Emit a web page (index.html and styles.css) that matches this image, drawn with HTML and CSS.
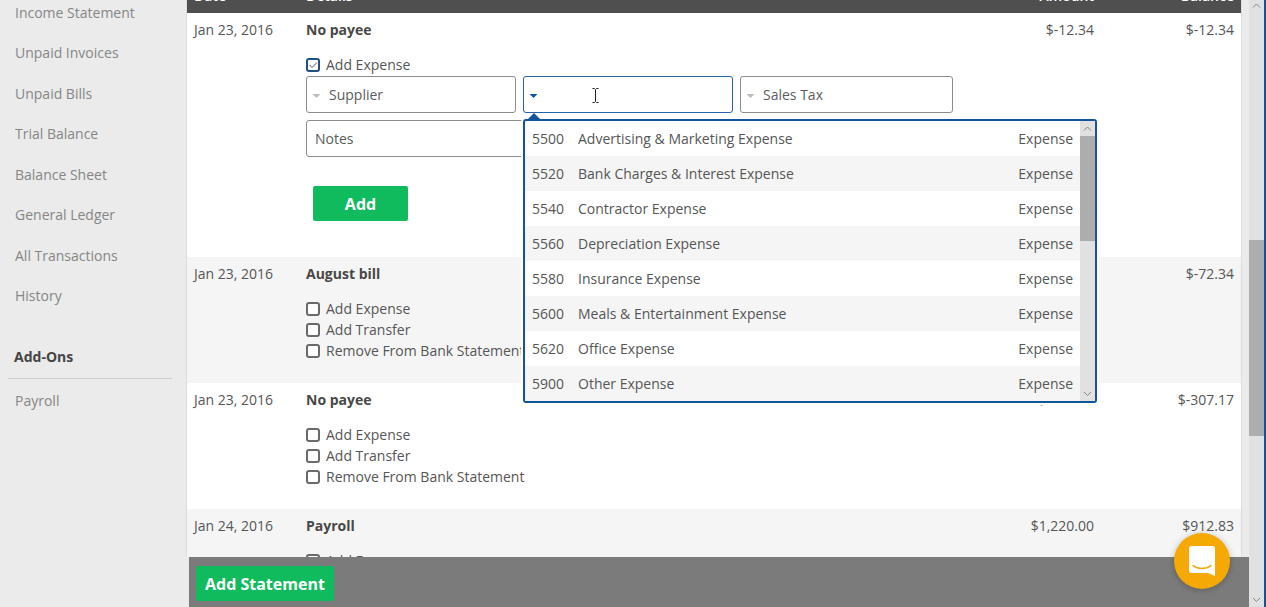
FILE: index.html
```html
<!DOCTYPE html>
<html lang="en">
<head>
<meta charset="utf-8">
<title>Bank Statement</title>
<link rel="stylesheet" href="styles.css">
</head>
<body>
<div class="app">
  <nav class="sidebar">
    <ul class="nav-list">
      <li><a href="#">Income Statement</a></li>
      <li><a href="#">Unpaid Invoices</a></li>
      <li><a href="#">Unpaid Bills</a></li>
      <li><a href="#">Trial Balance</a></li>
      <li><a href="#">Balance Sheet</a></li>
      <li><a href="#">General Ledger</a></li>
      <li><a href="#">All Transactions</a></li>
      <li><a href="#">History</a></li>
    </ul>
    <h2 class="nav-title">Add-Ons</h2>
    <ul class="nav-addons">
      <li><a href="#">Payroll</a></li>
    </ul>
  </nav>

  <main class="main">
    <div class="content">
      <table class="statement">
        <thead>
          <tr><th class="date">Date</th><th>Details</th><th class="money">Amount</th><th class="money">Balance</th></tr>
        </thead>
        <tbody>
          <tr>
            <td>Jan 23, 2016</td>
            <td>
              <strong class="payee">No payee</strong>
              <label class="check"><input type="checkbox" checked>Add Expense</label>
              <form class="expense">
                <div class="fields">
                  <div class="field">
                    <svg class="caret" viewBox="0 0 8 4"><path d="M0 0h8L4 4z"/></svg>
                    <input class="box combo" type="text" placeholder="Supplier" aria-label="Supplier">
                  </div>
                  <div class="field active">
                    <svg class="caret" viewBox="0 0 8 4"><path d="M0 0h8L4 4z"/></svg>
                    <input class="box combo" type="text" aria-label="Account">
                    <svg class="pointer" viewBox="0 0 7 15"><path d="M.5.5h2l1 1 1-1h2M3.5 1.500v12M.5 14.500h2l1-1 1 1h2"/></svg>
                    <div class="dropdown">
                      <ul class="options" role="listbox" aria-label="Accounts">
                        <li role="option"><span>5500</span><span>Advertising &amp; Marketing Expense</span><span>Expense</span></li>
                        <li role="option"><span>5520</span><span>Bank Charges &amp; Interest Expense</span><span>Expense</span></li>
                        <li role="option"><span>5540</span><span>Contractor Expense</span><span>Expense</span></li>
                        <li role="option"><span>5560</span><span>Depreciation Expense</span><span>Expense</span></li>
                        <li role="option"><span>5580</span><span>Insurance Expense</span><span>Expense</span></li>
                        <li role="option"><span>5600</span><span>Meals &amp; Entertainment Expense</span><span>Expense</span></li>
                        <li role="option"><span>5620</span><span>Office Expense</span><span>Expense</span></li>
                        <li role="option"><span>5900</span><span>Other Expense</span><span>Expense</span></li>
                      </ul>
                      <div class="scrollbar">
                        <svg class="arrow" viewBox="0 0 15 15"><path d="M4 9.500 7.500 6 11 9.500"/></svg>
                        <div class="track"><div class="thumb list-thumb"></div></div>
                        <svg class="arrow" viewBox="0 0 15 15"><path d="M4 6 7.500 9.500 11 6"/></svg>
                      </div>
                    </div>
                  </div>
                  <div class="field tax">
                    <svg class="caret" viewBox="0 0 8 4"><path d="M0 0h8L4 4z"/></svg>
                    <input class="box combo" type="text" placeholder="Sales Tax" aria-label="Sales Tax">
                  </div>
                </div>
                <input class="box notes" type="text" placeholder="Notes" aria-label="Notes">
                <button class="btn add" type="button">Add</button>
              </form>
            </td>
            <td class="money">$-12.34</td>
            <td class="money">$-12.34</td>
          </tr>
          <tr>
            <td>Jan 23, 2016</td>
            <td>
              <strong class="payee">August bill</strong>
              <label class="check"><input type="checkbox">Add Expense</label>
              <label class="check"><input type="checkbox">Add Transfer</label>
              <label class="check"><input type="checkbox">Remove From Bank Statement</label>
            </td>
            <td class="money"></td>
            <td class="money">$-72.34</td>
          </tr>
          <tr>
            <td>Jan 23, 2016</td>
            <td>
              <strong class="payee">No payee</strong>
              <label class="check"><input type="checkbox">Add Expense</label>
              <label class="check"><input type="checkbox">Add Transfer</label>
              <label class="check"><input type="checkbox">Remove From Bank Statement</label>
            </td>
            <td class="money">$-234.83</td>
            <td class="money">$-307.17</td>
          </tr>
          <tr>
            <td>Jan 24, 2016</td>
            <td>
              <strong class="payee">Payroll</strong>
              <label class="check"><input type="checkbox">Add Expense</label>
            </td>
            <td class="money">$1,220.00</td>
            <td class="money">$912.83</td>
          </tr>
        </tbody>
      </table>
    </div>
    <footer class="actions">
      <button class="btn" type="button">Add Statement</button>
    </footer>
  </main>

  <div class="scrollbar page-scroll">
    <svg class="arrow" viewBox="0 0 15 15"><path d="M4 7.500 7.500 4 11 7.500"/></svg>
    <div class="track"><div class="thumb page-thumb"></div></div>
    <svg class="arrow" viewBox="0 0 15 15"><path d="M4 6 7.500 9.500 11 6"/></svg>
  </div>

  <button class="chat" type="button" aria-label="Open chat">
    <svg viewBox="0 0 28 32"><path class="bubble" d="M4 1h20a3 3 0 0 1 3 3v27l-7-3H4a3 3 0 0 1-3-3V4a3 3 0 0 1 3-3z"/><path class="smile" d="M5 20.500c5 4 13 4 18 0"/></svg>
  </button>
</div>
</body>
</html>
```
FILE: styles.css
```css
* { box-sizing: border-box; }

body {
  margin: 0;
  font: 14px/20px "Open Sans", "Noto Sans", sans-serif;
  color: #565656;
  background: #ebebeb;
}

ul { list-style: none; margin: 0; padding: 0; }

input, button { font: inherit; color: inherit; }

.app {
  display: flex;
  height: 100vh;
  overflow: hidden;
  border-right: 2px solid #1c4f8c;
}

.sidebar {
  flex: none;
  width: 186px;
  padding: 3px 14px 0 8px;
}

.nav-list {
  display: flex;
  flex-direction: column;
  justify-content: space-between;
  height: 303px;
}

.sidebar a {
  display: block;
  padding-left: 7px;
  color: #868686;
  text-decoration: none;
}

.nav-title {
  margin: 41px 0 12px;
  padding: 0 6px 11px;
  border-bottom: 1px solid #cdcdcd;
  font-size: 14px;
  line-height: 20px;
  color: #444;
}

.main {
  flex: 1;
  min-width: 0;
  display: flex;
  flex-direction: column;
}

.content {
  flex: 1;
  min-height: 0;
  overflow: hidden;
  margin-right: 7px;
  border: 1px solid #dcdcdc;
  border-width: 0 1px;
  background: #fff;
}

.statement {
  width: 100%;
  margin-top: -21px;
  border-spacing: 0;
  table-layout: fixed;
}

.statement th {
  height: 34px;
  padding: 0 7px;
  background: #4f4f4f;
  color: #fff;
  font-weight: 600;
  text-align: left;
}

.statement .date { width: 112px; }

.statement .money { width: 140px; text-align: right; }

.statement td { padding: 7px 7px 22px; vertical-align: top; }

.statement tbody tr:nth-child(even) { background: #f5f5f5; }

.payee {
  display: block;
  margin-bottom: 14px;
  font-weight: 700;
  color: #484848;
}

.check {
  display: flex;
  align-items: center;
  gap: 6px;
  width: max-content;
  line-height: 21px;
}

.check input {
  appearance: none;
  width: 14px;
  height: 14px;
  margin: 0;
  border: 2px solid #6a6a6a;
  border-radius: 3px;
  background: #fff;
}

.check input:checked {
  border-color: #1f5186;
  background: #fff url("data:image/svg+xml,%3Csvg xmlns='http://www.w3.org/2000/svg' viewBox='0 0 10 10'%3E%3Cpath d='M1.500 5l2.500 2.500L9 2.500' fill='none' stroke='%23555'/%3E%3C/svg%3E") center / 10px no-repeat;
}

.expense {
  display: flex;
  flex-direction: column;
  align-items: flex-start;
  gap: 7px;
  padding: 1px 0 14px;
}

.fields { display: flex; gap: 7px; }

.field { position: relative; width: 210px; }

.tax { width: 213px; }

.box {
  display: block;
  width: 100%;
  height: 37px;
  padding: 0 8px;
  border: 1px solid #8c8c8c;
  border-radius: 3px;
  background: #fff;
  outline: 0;
}

.box::placeholder { color: #5c5c5c; opacity: 1; }

.combo { padding-left: 22px; }

.active .box { border-color: #2564a8; }

.notes { width: 427px; }

.caret {
  position: absolute;
  left: 6px;
  top: 18px;
  width: 9px;
  height: 4px;
  fill: #bdbdbd;
}

.active .caret { fill: #0d56a6; }

.pointer {
  position: absolute;
  left: 69px;
  top: 12px;
  width: 7px;
  height: 15px;
  fill: none;
  stroke: #222;
}

.dropdown {
  position: absolute;
  z-index: 2;
  top: 43px;
  left: 0;
  display: flex;
  width: 574px;
  border: 2px solid #12559c;
  border-radius: 3px;
  background: #fff;
  box-shadow: 0 0 0 2px #fff;
}

.dropdown::before {
  content: "";
  position: absolute;
  left: 3px;
  top: -8px;
  border: 6px solid transparent;
  border-top: 0;
  border-bottom-color: #12559c;
}

.options { flex: 1; }

.options li {
  display: grid;
  grid-template-columns: 46px 1fr auto;
  padding: 0 7px;
  line-height: 35px;
}

.options li:nth-child(even) { background: #f5f5f5; }

.scrollbar {
  flex: none;
  display: flex;
  flex-direction: column;
  width: 15px;
  background: #e1e1e1;
}

.arrow {
  flex: none;
  width: 15px;
  height: 15px;
  fill: none;
  stroke: #858585;
}

.track { flex: 1; }

.thumb { background: #adadad; }

.list-thumb { height: 42%; }

.page-thumb { height: 34%; margin-top: 225px; }

.actions {
  flex: none;
  margin-left: 3px;
  padding: 9px 7px 6px;
  background: #7b7b7b;
}

.btn {
  display: block;
  height: 35px;
  padding: 0 9px;
  border: 0;
  border-radius: 2px;
  background: #0fbb5c;
  color: #fff;
  font-size: 16px;
  font-weight: 700;
}

.add { width: 95px; margin: 22px 0 0 7px; }

.chat {
  position: absolute;
  right: 36px;
  bottom: 18px;
  display: grid;
  place-items: center;
  width: 56px;
  height: 56px;
  padding: 0;
  border: 0;
  border-radius: 50%;
  background: #f5a905;
  box-shadow: 0 1px 6px rgba(0, 0, 0, 0.25);
}

.chat svg { width: 28px; height: 32px; }

.bubble { fill: #fff; }

.smile { fill: none; stroke: #f5a905; stroke-width: 1.5; stroke-linecap: round; }
```
